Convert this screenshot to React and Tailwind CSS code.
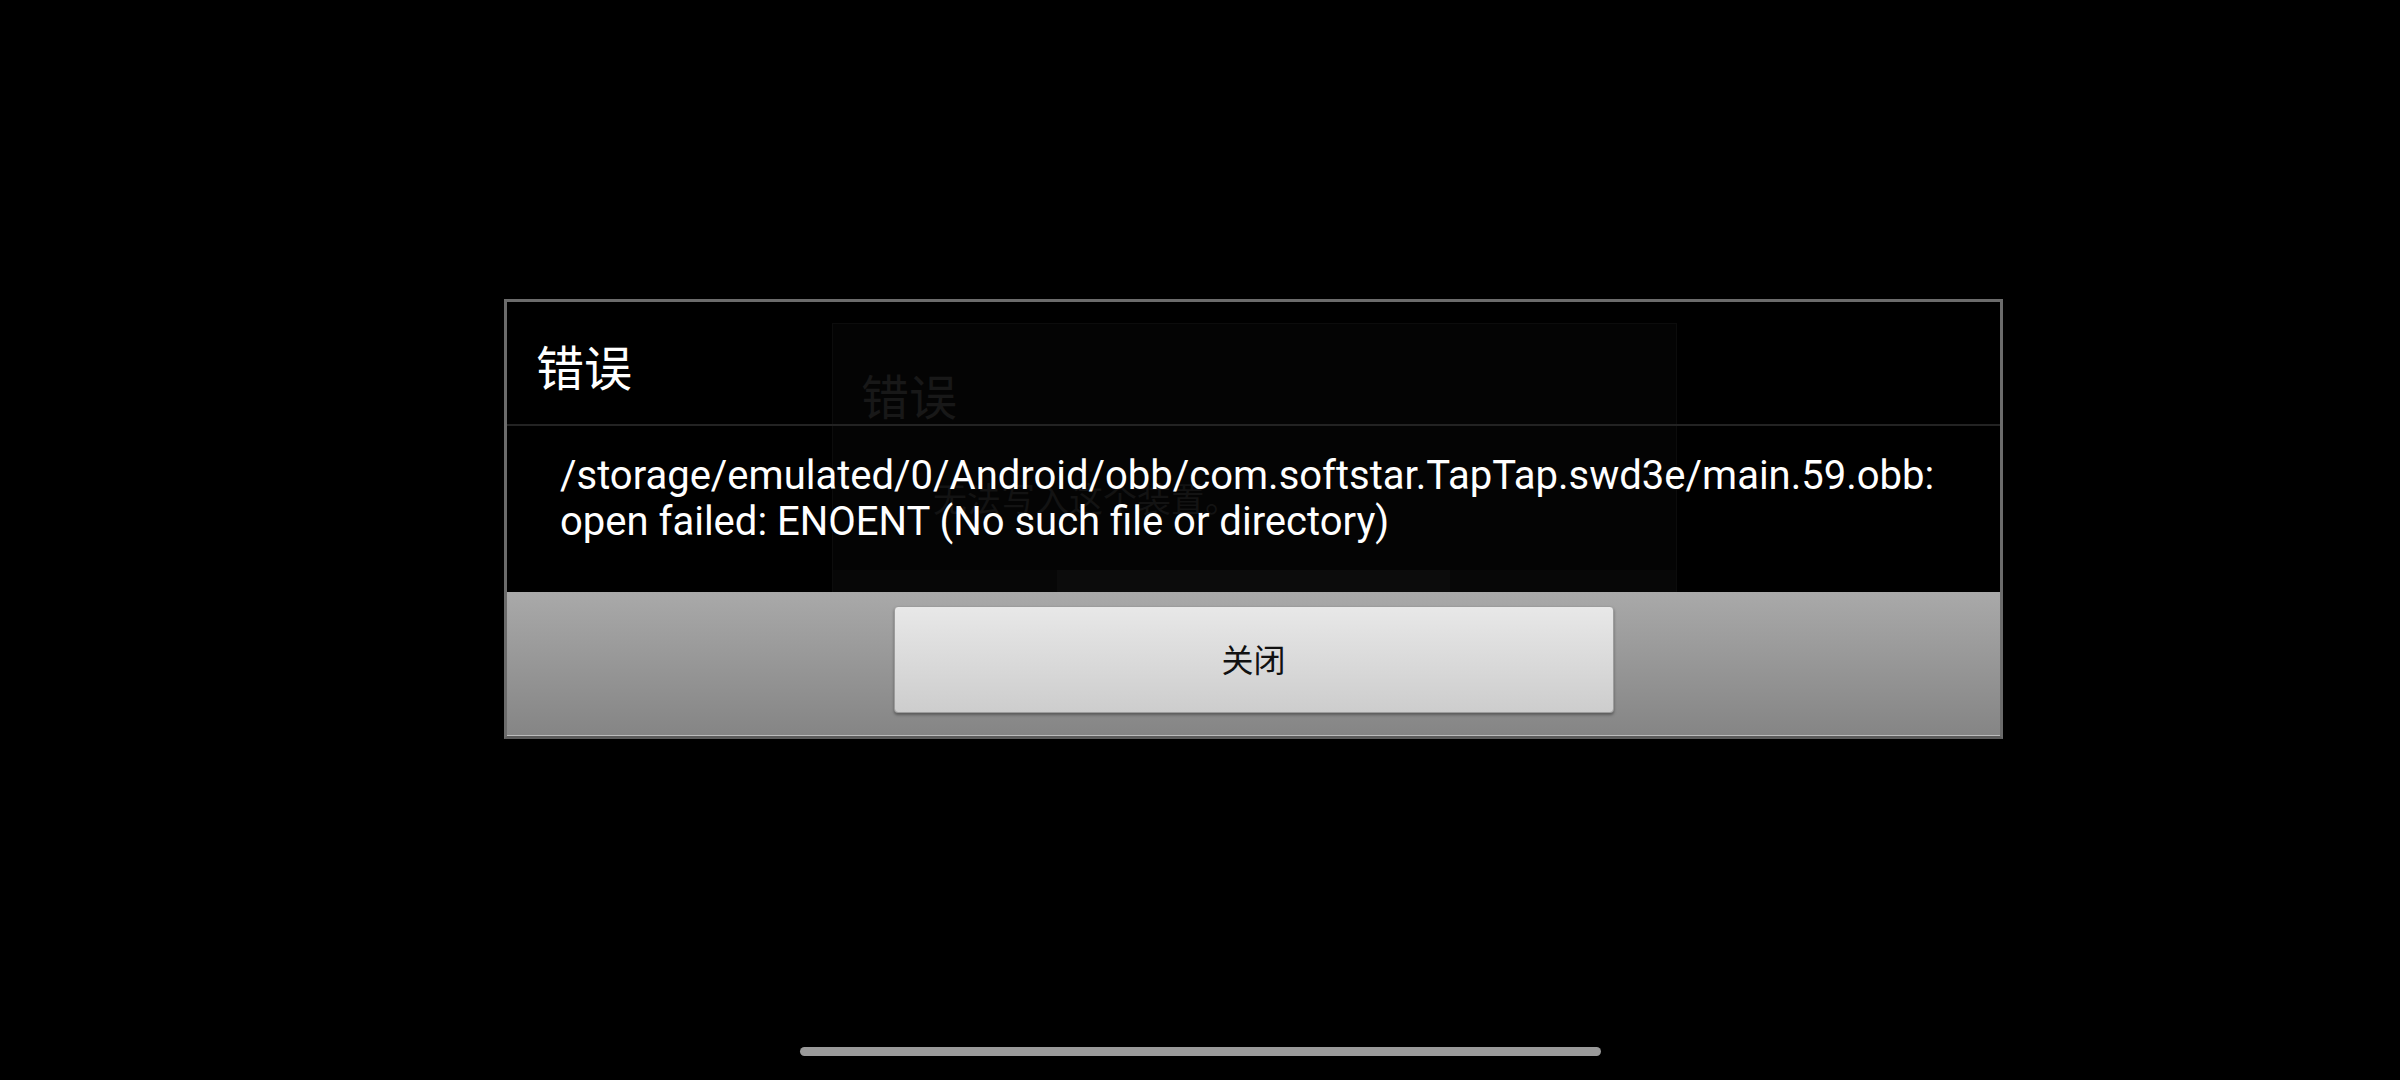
import React from "react";

/* Android-style legacy AlertDialog: error title, message, single close button.
 * A faint ghost of an earlier dialog bleeds through the black body. */
function GhostDialog() {
  return (
    <div
      aria-hidden="true"
      className="pointer-events-none absolute left-[325px] top-[21px] w-[845px] h-[272px] flex flex-col border border-[#0c0c0c] bg-[#040404]"
    >
      <div className="h-[118px] flex items-center pl-[28px] pt-[22px] text-[48px] text-[#181818] font-['Noto_Sans_CJK_SC',sans-serif]">
        错误
      </div>
      <div className="flex-1 pl-[100px] pt-[36px] text-[34px] leading-[40px] text-[#131313] font-['Noto_Sans_CJK_SC',sans-serif]">
        无法写入这个装置。
      </div>
      <div className="h-[24px] flex bg-[#070707]">
        <div className="ml-[224px] w-[393px] bg-[#0c0c0c]" />
      </div>
    </div>
  );
}

export default function App() {
  return (
    <div className="h-[1080px] w-[2400px] bg-black flex flex-col overflow-hidden">
      <div className="relative ml-[504px] mt-[299px] w-[1499px] flex flex-col border-x-[3px] border-t-[3px] border-b-[3px] border-[#6b6b6b] border-b-[#5c5c5c] bg-black">
        <GhostDialog />

        <div className="relative h-[122px] flex items-center pl-[29px] pt-[4px] text-[48px] text-white font-['Noto_Sans_CJK_SC',sans-serif]">
          错误
        </div>
        <div className="relative h-[2px] bg-[#232323]" />

        <div className="relative h-[166px] pl-[53px] pr-[10px] pt-[27px] text-[40px] leading-[46px] text-white font-['Roboto','Noto_Sans_CJK_SC',sans-serif]">
          <p>/storage/emulated/0/Android/obb/com.softstar.TapTap.swd3e/main.59.obb:</p>
          <p>open failed: ENOENT (No such file or directory)</p>
        </div>

        <div className="relative h-[144px] border-b border-[#bdbdbd] bg-linear-to-b from-[#a9a9a9] to-[#858585] pt-[14px]">
          <button className="mx-auto flex items-center justify-center pb-[4px] w-[720px] h-[107px] rounded-[4px] border border-[#9c9c9c] bg-linear-to-b from-[#e8e8e8] to-[#cdcdcd] shadow-[0_2px_3px_rgba(0,0,0,0.35)] text-[32px] text-[#111] font-['Noto_Sans_CJK_SC',sans-serif]">
            关闭
          </button>
        </div>
      </div>

      <div className="flex-1" />
      <div className="mx-auto mb-[24px] h-[9px] w-[801px] rounded-full bg-[#9a9a9a]" />
    </div>
  );
}
